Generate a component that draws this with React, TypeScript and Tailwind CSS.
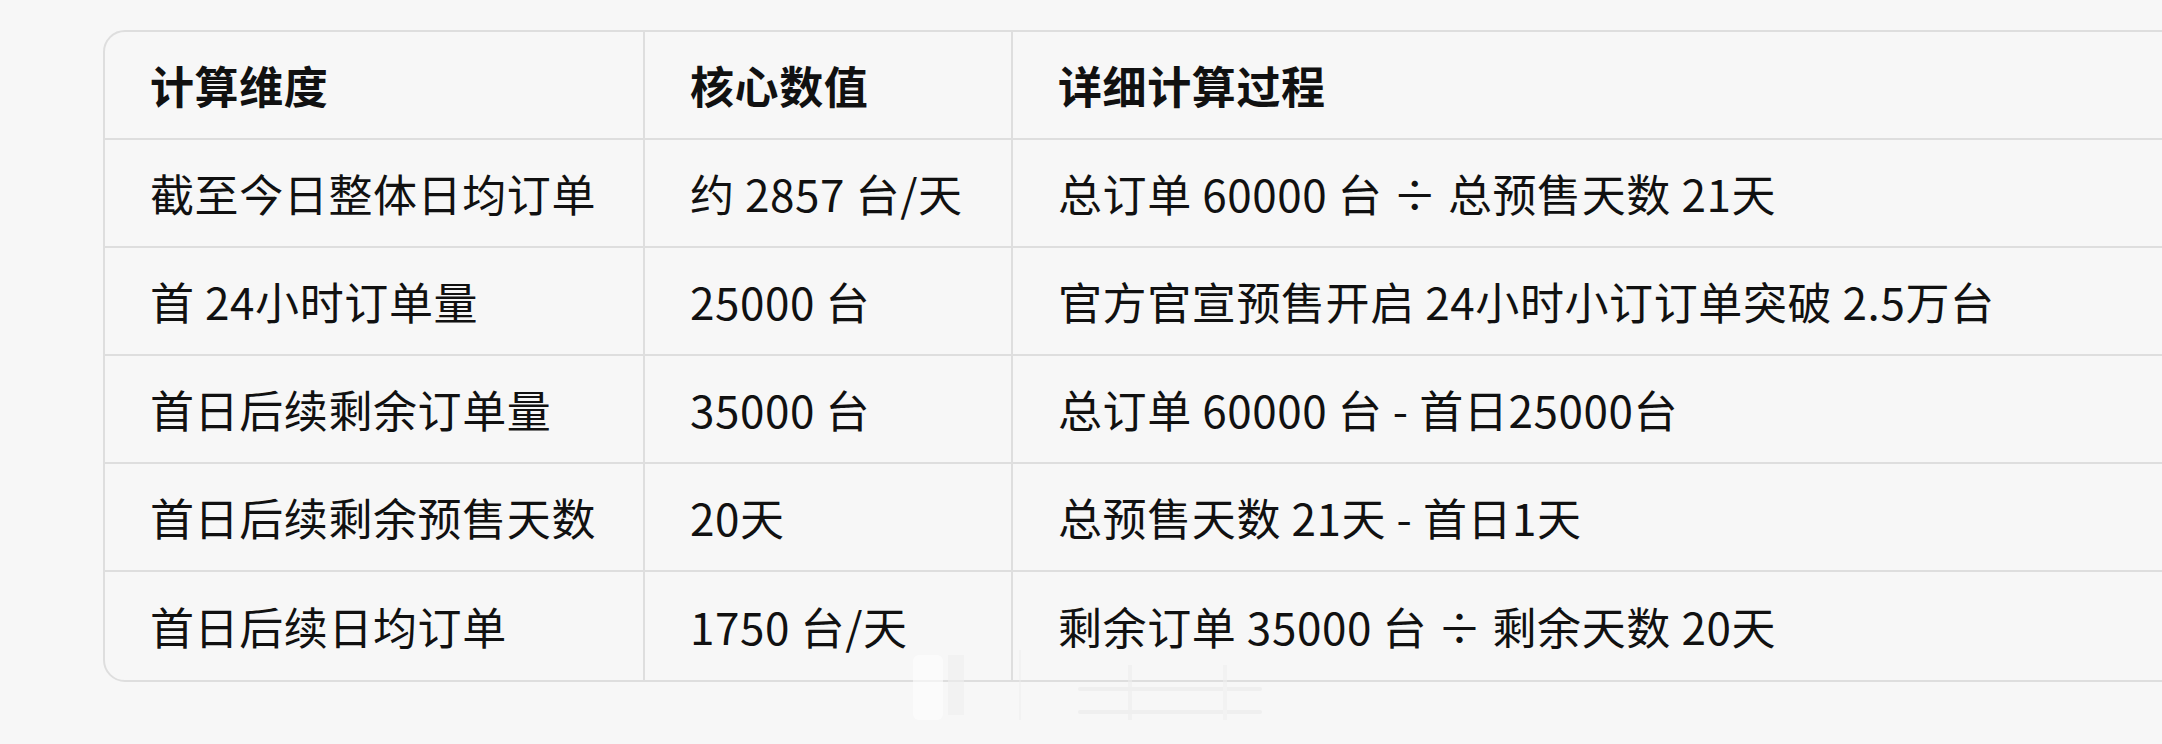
import React from 'react';

const rows: [string, string, string][] = [
  ['截至今日整体日均订单', '约 2857 台/天', '总订单 60000 台 ÷ 总预售天数 21天'],
  ['首 24小时订单量', '25000 台', '官方官宣预售开启 24小时小订订单突破 2.5万台'],
  ['首日后续剩余订单量', '35000 台', '总订单 60000 台 - 首日25000台'],
  ['首日后续剩余预售天数', '20天', '总预售天数 21天 - 首日1天'],
  ['首日后续日均订单', '1750 台/天', '剩余订单 35000 台 ÷ 剩余天数 20天'],
];

const FONT = { fontFamily: '"Noto Sans CJK SC", "Noto Sans", sans-serif' };

const Cell: React.FC<{ children: React.ReactNode; head?: boolean; last?: boolean; border?: boolean }> = ({
  children,
  head,
  last,
  border,
}) => (
  <div
    className={`flex h-[108px] items-center pl-[45px] whitespace-nowrap text-[44px] tracking-[0.6px] text-[#111111] ${
      head ? 'font-bold' : 'font-normal'
    } ${last ? '' : 'border-b-2 border-[#dedede]'} ${border ? 'border-r-2 border-r-[#dedede]' : ''}`}
  >
    {children}
  </div>
);

export default function App() {
  return (
    <div className="relative h-[744px] w-[2162px] overflow-hidden bg-[#f7f7f7]" style={FONT}>
      <div className="pl-[103px] pt-[30px]">
        {/* table runs off the right edge of the shot */}
        <div className="grid w-[2200px] grid-cols-[540px_368px_1fr] overflow-hidden rounded-[22px] border-2 border-[#dedede] bg-[#f7f7f7]">
          <Cell head border>计算维度</Cell>
          <Cell head border>核心数值</Cell>
          <Cell head>详细计算过程</Cell>
          {rows.map((r, i) => (
            <React.Fragment key={i}>
              <Cell border last={i === rows.length - 1}>{r[0]}</Cell>
              <Cell border last={i === rows.length - 1}>{r[1]}</Cell>
              <Cell last={i === rows.length - 1}>{r[2]}</Cell>
            </React.Fragment>
          ))}
        </div>
      </div>

      {/* faint watermark */}
      <svg className="absolute left-[900px] top-[650px] opacity-60" width="380" height="80" viewBox="0 0 380 80" aria-hidden="true">
        <rect x="13" y="5" width="30" height="65" rx="6" fill="#ffffff" />
        <rect x="48" y="5" width="16" height="60" fill="#efefef" />
        <line x1="120" y1="0" x2="120" y2="70" stroke="#ececec" strokeWidth="1.5" />
        <line x1="230" y1="15" x2="230" y2="70" stroke="#eeeeee" strokeWidth="4" />
        <line x1="180" y1="39" x2="360" y2="39" stroke="#ebebeb" strokeWidth="4" strokeLinecap="round" />
        <line x1="180" y1="62" x2="360" y2="62" stroke="#ebebeb" strokeWidth="4" strokeLinecap="round" />
        <line x1="325" y1="15" x2="325" y2="70" stroke="#f0f0f0" strokeWidth="4" />
      </svg>
    </div>
  );
}
